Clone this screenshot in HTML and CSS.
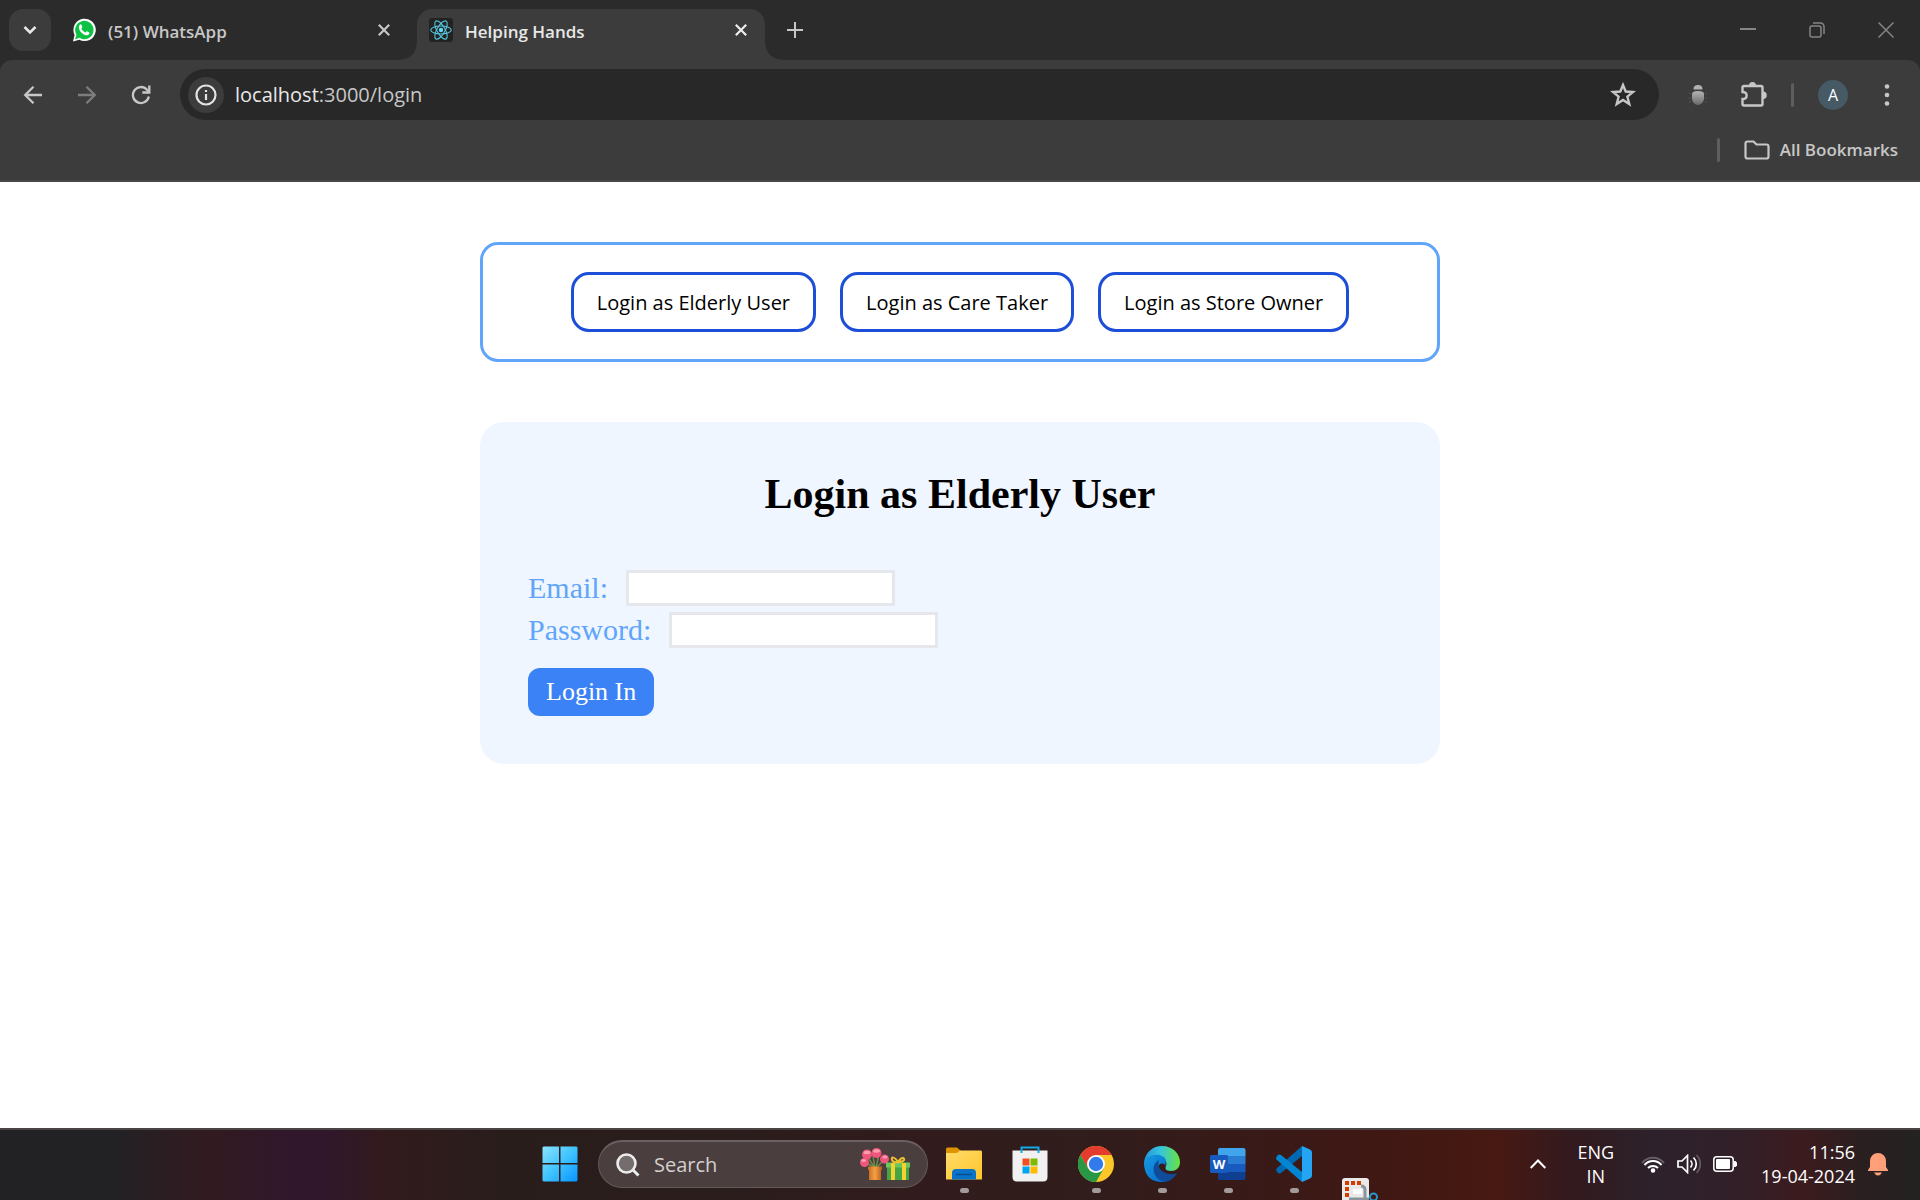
FILE: index.html
```html
<!DOCTYPE html>
<html lang="en">
<head>
<meta charset="utf-8">
<title>Helping Hands</title>
<link rel="stylesheet" href="styles.css">
</head>
<body>
<header class="browser">
  <div class="tabstrip">
    <button class="tab-search" aria-label="Search tabs">
      <svg width="14" height="14" viewBox="0 0 14 14" fill="none" stroke="#e8e8e8" stroke-width="2.500"><path d="M1.500 4L7 9.500L12.500 4"/></svg>
    </button>
    <div class="tab">
      <svg class="favicon" viewBox="0 0 24 24"><path d="M1 23.500L2.600 17A11.200 11.200 0 1 1 7.300 21.800Z" fill="#fff"/><path d="M3 21.500L4.500 16.800A9.200 9.200 0 1 1 7.500 19.800Z" fill="#0dc143"/><path d="M7.500 7C8.600 6 9.300 6.300 9.600 7L10.300 8.800C10.400 9.500 9.700 10 9.300 10.500C10.300 12.500 11.700 13.800 13.500 14.500C14 14.300 14.400 13.200 15 13.300L17.300 14.400C17.700 15.300 17 16.500 16 17C11.500 18.500 5 11.800 7.500 7Z" fill="#fff"/></svg>
      <span class="tab-title">(51) WhatsApp</span>
      <button class="tab-close" aria-label="Close WhatsApp tab"><svg width="12" height="12" viewBox="0 0 12 12" stroke="#c7c7c7" stroke-width="2.200"><path d="M.8.800L11.200 11.200M11.200.800L.8 11.200"/></svg></button>
    </div>
    <div class="tab tab-active">
      <svg class="favicon" viewBox="0 0 24 24"><rect width="24" height="24" rx="3" fill="#222"/><g fill="none" stroke="#55c6de" stroke-width="1.100"><ellipse cx="12" cy="12" rx="10.300" ry="4"/><ellipse cx="12" cy="12" rx="10.300" ry="4" transform="rotate(60 12 12)"/><ellipse cx="12" cy="12" rx="10.300" ry="4" transform="rotate(120 12 12)"/></g><circle cx="12" cy="12" r="2.200" fill="#61dafb"/></svg>
      <span class="tab-title">Helping Hands</span>
      <button class="tab-close" aria-label="Close Helping Hands tab"><svg width="12" height="12" viewBox="0 0 12 12" stroke="#eee" stroke-width="2.200"><path d="M.8.800L11.200 11.200M11.200.800L.8 11.200"/></svg></button>
    </div>
    <button class="new-tab" aria-label="New tab"><svg width="16" height="16" viewBox="0 0 16 16" stroke="#c7c7c7" stroke-width="2"><path d="M8 0V16M0 8H16"/></svg></button>
    <div class="window-controls">
      <button aria-label="Minimize"><svg width="16" height="16" viewBox="0 0 16 16" stroke="#858585" stroke-width="2"><path d="M0 7H16"/></svg></button>
      <button aria-label="Restore"><svg width="16" height="16" viewBox="0 0 16 16" fill="none" stroke="#858585" stroke-width="1.500"><rect x="1" y="4" width="11" height="11" rx="2"/><path d="M4 1H11.500A3.500 3.500 0 0 1 15 4.500V12"/></svg></button>
      <button aria-label="Close window"><svg width="16" height="16" viewBox="0 0 16 16" stroke="#858585" stroke-width="1.500"><path d="M.5.500L15.500 15.500M15.500.500L.5 15.500"/></svg></button>
    </div>
  </div>
  <div class="toolbar">
    <div class="nav-buttons">
      <button aria-label="Back"><svg width="20" height="20" viewBox="0 0 20 20" fill="none" stroke="#c7c7c7" stroke-width="2.300"><path d="M19 10H2.500M10.500 1.700L2.200 10L10.500 18.300"/></svg></button>
      <button aria-label="Forward"><svg width="20" height="20" viewBox="0 0 20 20" fill="none" stroke="#7d7d7d" stroke-width="2.300"><path d="M1 10H17.500M9.500 1.700L17.800 10L9.500 18.300"/></svg></button>
      <button aria-label="Reload"><svg width="20" height="20" viewBox="0 0 20 20" fill="none" stroke="#c7c7c7" stroke-width="2.300"><path d="M17.800 11.500A8 8 0 1 1 16 4.800L18 7"/><path d="M18.300.500V7.500H11.300"/></svg></button>
    </div>
    <div class="omnibox">
      <button class="site-info" aria-label="View site information"><svg width="22" height="22" viewBox="0 0 22 22" fill="none" stroke="#e3e3e3" stroke-width="2.200"><circle cx="11" cy="11" r="9.500"/><path d="M11 10V16M11 6V8"/></svg></button>
      <span class="url"><span class="host">localhost</span>:3000/login</span>
      <button class="bookmark" aria-label="Bookmark this page"><svg width="26" height="26" viewBox="0 0 26 26" fill="none" stroke="#c7c7c7" stroke-width="2.400"><path d="M13 3L15.700 9.500L23 10L17.400 14.700L19.300 22L13 18L6.700 22L8.600 14.700L3 10L10.300 9.500Z"/></svg></button>
    </div>
    <button class="extension" aria-label="Extension"><svg width="20" height="22" viewBox="0 0 20 22"><defs><linearGradient id="bug" x1="0" y1="0" x2="0" y2="1"><stop offset="0" stop-color="#b5b5b5"/><stop offset="1" stop-color="#696969"/></linearGradient></defs><path d="M5.500 5.500C5.500 2 7.500 1 10 1S14.500 2 14.500 5.500Z" fill="#b0b0b0"/><path d="M4 10C4 8 6 7 10 7S16 8 16 10V14C16 18 13 21 10 21S4 18 4 14Z" fill="url(#bug)"/><path d="M1 9L3 10M1 14H3M1 19L3 17M19 9L17 10M19 14H17M19 19L17 17" stroke="#555"/></svg></button>
    <button class="extensions" aria-label="Extensions"><svg width="28" height="28" viewBox="0 0 28 28"><path d="M5 5H22Q23.500 5 23.500 6.500V23Q23.500 24.500 22 24.500H5Q3.500 24.500 3.500 23V18C9 18 9 11 3.500 11V6.500Q3.500 5 5 5Z" fill="none" stroke="#c7c7c7" stroke-width="2.400"/><path d="M10 4.500A3.500 3.500 0 0 1 17 4.500ZM24 10.500A3.500 3.500 0 0 1 24 18Z" fill="#c7c7c7"/></svg></button>
    <span class="divider"></span>
    <button class="avatar" aria-label="Profile">A</button>
    <button class="more" aria-label="Menu"><svg width="6" height="22" viewBox="0 0 6 22" fill="#c7c7c7"><circle cx="3" cy="2.500" r="2.300"/><circle cx="3" cy="11" r="2.300"/><circle cx="3" cy="19.500" r="2.300"/></svg></button>
  </div>
  <div class="bookmarks">
    <span class="divider"></span>
    <button class="all-bookmarks"><svg width="26" height="20" viewBox="0 0 26 20" fill="none" stroke="#c7c7c7" stroke-width="2.200"><path d="M3.500 1.500H9.500L12.500 4.500H22.500Q24.500 4.500 24.500 6.500V16.500Q24.500 18.500 22.500 18.500H3.500Q1.500 18.500 1.500 16.500V3.500Q1.500 1.500 3.500 1.500Z"/></svg>All Bookmarks</button>
  </div>
</header>

<main class="page">
  <nav class="roles" aria-label="Account type">
    <button>Login as Elderly User</button>
    <button>Login as Care Taker</button>
    <button>Login as Store Owner</button>
  </nav>
  <form class="login">
    <h1>Login as Elderly User</h1>
    <div class="field"><label for="email">Email:</label><input id="email" type="email"></div>
    <div class="field"><label for="password">Password:</label><input id="password" type="password"></div>
    <button type="button" class="submit">Login In</button>
  </form>
</main>

<footer class="taskbar">
  <div class="dock">
    <button class="app" aria-label="Start"><svg width="36" height="36" viewBox="0 0 36 36"><defs><linearGradient id="win" x1="0" y1="0" x2="1" y2="1"><stop offset="0" stop-color="#8be3ff"/><stop offset=".5" stop-color="#3fc3ff"/><stop offset="1" stop-color="#0894ff"/></linearGradient></defs><path d="M1.500.500H17V17H.5V1.500ZM18.500.500H34.500L35.500 1.500V17H18.500ZM.5 18.500H17V35.500H1.500L.5 34.500ZM18.500 18.500H35.500V34.500L34.500 35.500H18.500Z" fill="url(#win)"/></svg></button>
    <label class="search">
      <svg width="24" height="24" viewBox="0 0 24 24" fill="#756d6d" stroke="#ececec" stroke-width="2.600"><circle cx="10.500" cy="10.500" r="9"/><path d="M17 17L22.500 22.500" stroke-width="3"/></svg>
      <input type="search" placeholder="Search" aria-label="Search">
      <svg width="50" height="34" viewBox="0 0 50 34"><defs><linearGradient id="pot"><stop offset="0" stop-color="#c9681f"/><stop offset=".5" stop-color="#f3a045"/><stop offset="1" stop-color="#b85c1b"/></linearGradient></defs><path d="M15 20L7 8M15 20L13 8M16 20L19 6M16 20L24 12M15 20L5 14" stroke="#6c8b45" stroke-width="1.500" fill="none"/><g fill="#f0557d"><circle cx="7" cy="6.500" r="5"/><circle cx="16.500" cy="5" r="5"/><circle cx="24.500" cy="11" r="4.500"/><circle cx="4.500" cy="14.500" r="4.500"/></g><g fill="#ff9cae"><ellipse cx="7" cy="4.500" rx="3.500" ry="1.700"/><ellipse cx="16.500" cy="3" rx="3.500" ry="1.700"/><ellipse cx="25" cy="9" rx="2.500" ry="1.500"/><ellipse cx="3.500" cy="12.500" rx="2.500" ry="1.500"/></g><path d="M8 18.500H22V22H21V32H9V22H8Z" fill="url(#pot)"/><rect x="27" y="17" width="22" height="15" fill="#45a446"/><rect x="26" y="14.500" width="24" height="5" fill="#6dc65b"/><path d="M31 15H35V32H31ZM42 15H46V32H42Z" fill="#f5d22f"/><path d="M38 14C34 8 31 9 32 12S37 14 38 14C39 14 43 14 44 12S42 8 38 14Z" fill="none" stroke="#efc22d" stroke-width="2"/></svg>
    </label>
    <button class="app running" aria-label="File Explorer"><svg width="36" height="36" viewBox="0 0 36 36"><defs><linearGradient id="folder" x1="0" y1="0" x2="1" y2="1"><stop offset="0" stop-color="#ffdc6b"/><stop offset="1" stop-color="#ffc52b"/></linearGradient></defs><path d="M0 3Q0 1.500 1.500 1.500H11L15 5V9H0Z" fill="#dc9500"/><path d="M0 7H11L14 4.500H35Q36 4.500 36 6V33.500H0Z" fill="url(#folder)"/><path d="M6 33.500V27Q6 23 10 23H26Q30 23 30 27V33.500Z" fill="#0873c8"/><path d="M10 28.500H26" stroke="#064d91" stroke-width="1.500"/></svg></button>
    <button class="app" aria-label="Microsoft Store"><svg width="36" height="36" viewBox="0 0 36 36"><path d="M.5 4.500H35.500V31Q35.500 35.500 31 35.500H5Q.5 35.500.5 31Z" fill="#f1f1f1"/><path d="M9.500 7V1.500H26.500V7" fill="none" stroke="#12a9e8" stroke-width="2"/><path d="M10.500 12.500H17.500V19.500H10.500Z" fill="#f25022"/><path d="M18.500 12.500H25.500V19.500H18.500Z" fill="#7fba00"/><path d="M10.500 20.500H17.500V27.500H10.500Z" fill="#00a4ef"/><path d="M18.500 20.500H25.500V27.500H18.500Z" fill="#ffb900"/></svg></button>
    <button class="app running" aria-label="Chrome"><svg width="36" height="36" viewBox="0 0 36 36"><circle cx="18" cy="18" r="18" fill="#fcc629"/><path d="M2.400 9A18 18 0 0 1 33.600 9H18L10.200 22.500Z" fill="#e33b2e"/><path d="M2.400 9A18 18 0 0 0 18 36L25.800 22.500H10.200Z" fill="#299846"/><circle cx="18" cy="18" r="9" fill="#fff"/><circle cx="18" cy="18" r="7.200" fill="#327bea"/></svg></button>
    <button class="app running" aria-label="Edge"><svg width="36" height="36" viewBox="0 0 36 36"><defs><linearGradient id="edge-top"><stop offset="0" stop-color="#2395dc"/><stop offset=".45" stop-color="#35c4df"/><stop offset="1" stop-color="#69e43e"/></linearGradient><linearGradient id="edge-side" x1="0" y1="0" x2="1" y2="1"><stop offset="0" stop-color="#159ce2"/><stop offset="1" stop-color="#0669cb"/></linearGradient></defs><path d="M0 17C1 6 9 0 18 0C29 0 36 8 36 16C36 22 32 25 27 25C21 25 21 22 22 20C25 14 15 8 6 11Z" fill="url(#edge-top)"/><path d="M0 17C2 9 12 7 18 10C25 14 20 16 22 20C17 14 12 20 15 27C18 33 24 35 20 36C7 37 0 29 0 17Z" fill="url(#edge-side)"/><path d="M15 14C5 20 10 34 21 36C27 35 31 31 33 27C29 29 24 28 22 27C16 25 13 20 15 14Z" fill="#104b99"/></svg></button>
    <button class="app running" aria-label="Word"><svg width="36" height="36" viewBox="0 0 36 36"><path d="M10 2H33.500Q35.500 2 35.500 4V10H8V4Q8 2 10 2Z" fill="#41a5ee"/><path d="M8 10H35.500V18H8Z" fill="#2b7cd3"/><path d="M8 18H35.500V26H8Z" fill="#185abd"/><path d="M8 26H35.500V32Q35.500 34 33.500 34H10Q8 34 8 32Z" fill="#103f91"/><rect y="9" width="18" height="18" rx="1.500" fill="#185abd"/><text x="9" y="22.500" text-anchor="middle" class="word-letter">W</text></svg></button>
    <button class="app running" aria-label="Visual Studio Code"><svg width="36" height="36" viewBox="0 0 36 36"><path d="M26 0V10L5 27Q3 28 1.500 26.500L.5 25Q-.5 23.500 1 22Z" fill="#0068b0"/><path d="M26 36V26L5 9Q3 8 1.500 9.500L.5 11Q-.5 12.500 1 14Z" fill="#0386d2"/><path d="M26 0L34 3.500Q36 4.500 36 6.500V29.500Q36 31.500 34 32.500L26 36Z" fill="#24a4f2"/></svg></button>
    <button class="app opening" aria-label="Snipping Tool"><svg width="36" height="22" viewBox="0 0 36 22"><path d="M3 0H24Q27 0 27 3V22H0V3Q0 0 3 0Z" fill="#e9e9e9"/><path d="M3 3H7V7H3ZM9 3H13V7H9ZM15 3H19V7H15ZM3 9H7V13H3ZM3 15H7V19H3Z" fill="#d83b01"/><path d="M19 8Q23 8 23 12V22M7 21H27" fill="none" stroke="#89949b" stroke-width="3"/><path d="M11 11H20V16H11Z" fill="#fff"/><circle cx="31.500" cy="19" r="3.500" fill="none" stroke="#2597ca" stroke-width="2"/></svg></button>
  </div>
  <div class="tray">
    <button aria-label="Show hidden icons"><svg width="16" height="10" viewBox="0 0 16 10" fill="none" stroke="#fff" stroke-width="2"><path d="M.7 9L8 1.500L15.300 9"/></svg></button>
    <button class="language">ENG<br>IN</button>
    <button class="status" aria-label="Network, volume and battery">
      <svg width="24" height="18" viewBox="0 0 24 18" fill="none" stroke="#fff" stroke-width="2"><path d="M1 8A14 14 0 0 1 23 8" stroke="#655e65"/><path d="M3.500 10A11 11 0 0 1 20.500 10M7 13A7 7 0 0 1 17 13"/><circle cx="12" cy="15.500" r="1.300" fill="#fff"/></svg>
      <svg width="24" height="20" viewBox="0 0 24 20" fill="none" stroke="#fff" stroke-width="1.700"><path d="M1 7H5L10.500 1.500V18.500L5 13H1Z"/><path d="M13.500 6.500A5 5 0 0 1 13.500 13.500M16.500 3.500A9 9 0 0 1 16.500 16.500"/><path d="M19.500 1A12.500 12.500 0 0 1 19.500 19" stroke="#655e65"/></svg>
      <svg width="24" height="16" viewBox="0 0 24 16"><rect x=".8" y=".8" width="19.400" height="14.400" rx="3" fill="none" stroke="#fff" stroke-width="1.500"/><rect x="3" y="3" width="14" height="10" rx="1" fill="#fff"/><path d="M21 5H22.500L24 6.500V9.500L22.500 11H21Z" fill="#fff"/></svg>
    </button>
    <button class="clock">11:56<br>19-04-2024</button>
    <button aria-label="Notifications"><svg width="20" height="24" viewBox="0 0 20 24" fill="#ffa07a"><path d="M2 9A8 8 0 0 1 18 9V15L20 18V19H0V18L2 15ZM6 20.500H14Q12.500 23.500 10 23.500T6 20.500Z"/></svg></button>
  </div>
</footer>
</body>
</html>
```
FILE: styles.css
```css
* { box-sizing: border-box; }
body {
  margin: 0;
  min-height: 100vh;
  display: flex;
  flex-direction: column;
  background: #fff;
  font-family: "Segoe UI", "Open Sans", "Noto Sans", sans-serif;
}
button {
  margin: 0;
  padding: 0;
  border: 0;
  background: none;
  color: inherit;
  font: inherit;
}
svg { display: block; flex: none; }

/* Browser frame */
.browser { background: #2b2b2b; color: #c7c7c7; }
.tabstrip {
  display: flex;
  align-items: center;
  height: 60px;
  padding: 9px 0 0 9px;
}
.tab-search {
  display: grid;
  place-items: center;
  width: 42px;
  height: 42px;
  border-radius: 14px;
  background: #3c3c3c;
  align-self: flex-start;
}
.tab {
  position: relative;
  display: flex;
  align-items: center;
  gap: 12px;
  width: 348px;
  height: 51px;
  padding: 0 18px 9px 12px;
  font-size: 17px;
  font-weight: 600;
  line-height: 24px;
}
.tab-search + .tab { margin-left: 9px; width: 357px; padding-right: 27px; }
.tab-active {
  background: #3c3c3c;
  color: #e8e8e8;
  border-radius: 15px 15px 0 0;
}
.tab-active::before,
.tab-active::after {
  content: "";
  position: absolute;
  bottom: 0;
  width: 16px;
  height: 16px;
}
.tab-active::before { right: 100%; background: radial-gradient(circle at 0 0, transparent 15px, #3c3c3c 16px); }
.tab-active::after { left: 100%; background: radial-gradient(circle at 100% 0, transparent 15px, #3c3c3c 16px); }
.favicon { width: 24px; height: 24px; }
.tab-title { flex: 1; padding-top: 3px; }
.new-tab { margin: 0 auto 9px 22px; }
.window-controls { display: flex; gap: 53px; padding: 0 26px 9px 0; }
.toolbar {
  display: flex;
  align-items: center;
  height: 69px;
  padding: 0 30px 0 23px;
  background: #3c3c3c;
  border-radius: 12px 12px 0 0;
}
.nav-buttons { display: flex; gap: 34px; }
.omnibox {
  flex: 1;
  display: flex;
  align-items: center;
  height: 51px;
  margin-left: 29px;
  padding: 0 23px 0 8px;
  border-radius: 26px;
  background: #282828;
}
.site-info {
  display: grid;
  place-items: center;
  width: 36px;
  height: 36px;
  border-radius: 50%;
  background: #3c3c3c;
}
.url { flex: 1; margin-left: 11px; font-size: 20px; line-height: 28px; }
.host { color: #e8e8e8; }
.extension { margin-left: 29px; }
.extensions { margin-left: 31px; }
.divider { width: 3px; height: 24px; border-radius: 2px; background: #5e5e5e; }
.toolbar .divider { margin-left: 24px; }
.avatar {
  width: 30px;
  height: 30px;
  margin-left: 24px;
  border-radius: 50%;
  background: #455a64;
  color: #fff;
  font-size: 16px;
}
.more { margin-left: 36px; }
.bookmarks {
  display: flex;
  justify-content: flex-end;
  align-items: center;
  gap: 24px;
  height: 53px;
  padding: 0 22px 10px 0;
  border-bottom: 2px solid #484848;
  background: #3c3c3c;
}
.all-bookmarks {
  display: flex;
  align-items: center;
  gap: 10px;
  font-size: 17px;
  font-weight: 600;
  line-height: 24px;
}

/* Login page */
.page {
  flex: 1;
  display: flex;
  flex-direction: column;
  gap: 60px;
  width: 50%;
  margin: 0 auto;
  padding: 60px 0;
}
.roles {
  display: flex;
  justify-content: center;
  gap: 24px;
  padding: 27px;
  border: 3px solid #60a5fa;
  border-radius: 18px;
}
.roles button {
  padding: 13px 23px 11px;
  border: 3px solid #1d4ed8;
  border-radius: 18px;
  color: #000;
  font-size: 20px;
  line-height: 30px;
}
.login {
  padding: 48px;
  border-radius: 24px;
  background: #eff6ff;
  font-family: Georgia, "Liberation Serif", serif;
}
.login h1 {
  margin: 0 0 52px;
  font-size: 42px;
  line-height: 48px;
  text-align: center;
}
.field {
  display: flex;
  align-items: center;
  gap: 18px;
  height: 36px;
  margin-bottom: 6px;
  color: #60a5fa;
  font-size: 30px;
}
.field input {
  width: 269px;
  height: 36px;
  padding: 0 6px;
  border: 3px solid #e5e7eb;
  background: #fff;
  font: inherit;
}
.submit {
  height: 48px;
  margin-top: 14px;
  padding: 0 18px;
  border-radius: 12px;
  background: #3b82f6;
  color: #fff;
  font-size: 26px;
}

/* Taskbar */
.taskbar {
  display: grid;
  grid-template-columns: 1fr auto 1fr;
  height: 72px;
  padding-bottom: 2px;
  border-top: 2px solid #4a4444;
  color: #fff;
  background: linear-gradient(90deg, #222124 0%, #222124 6%, #321a20 11%, #30172b 15%, #30172b 17%, #321a1c 20%, #291d1c 26%, #2a1d1c 38%, #321b1c 48%, #301d1c 56%, #381a18 65%, #401813 72%, #471912 78%, #321a1f 82%, #2d212b 86%, #31202a 90%, #3c1b1e 94%, #2a1f20 97%, #242222 100%);
}
.dock { grid-column: 2; display: flex; align-items: center; }
.app { position: relative; margin-left: 30px; }
.app:first-child { margin-left: 0; }
.search + .app { margin-left: 18px; }
.running::after {
  content: "";
  position: absolute;
  left: 14px;
  top: 42px;
  width: 9px;
  height: 5px;
  border-radius: 3px;
  background: #a29a9b;
}
.opening { align-self: flex-end; margin-bottom: -2px; }
.word-letter { fill: #fff; font: 700 13px "Open Sans", sans-serif; }
.search {
  display: flex;
  align-items: center;
  gap: 14px;
  width: 330px;
  height: 48px;
  margin-left: 20px;
  padding: 0 17px 0 17px;
  border: 1px solid #635959;
  border-top: 2px solid #6b6162;
  border-radius: 24px;
  background: #4a3e3e;
}
.search input {
  flex: 1;
  min-width: 0;
  padding: 0;
  border: 0;
  background: none;
  font: 20px/28px "Segoe UI", "Open Sans", sans-serif;
}
.search input::placeholder { color: #d4d0d0; opacity: 1; }
.tray {
  display: flex;
  align-items: center;
  justify-content: flex-end;
  padding-right: 32px;
  font-size: 18px;
  line-height: 24px;
}
.language { margin-left: 31px; }
.status { display: flex; align-items: center; gap: 12px; margin-left: 27px; }
.clock { margin: 0 13px 0 24px; text-align: right; }
```
